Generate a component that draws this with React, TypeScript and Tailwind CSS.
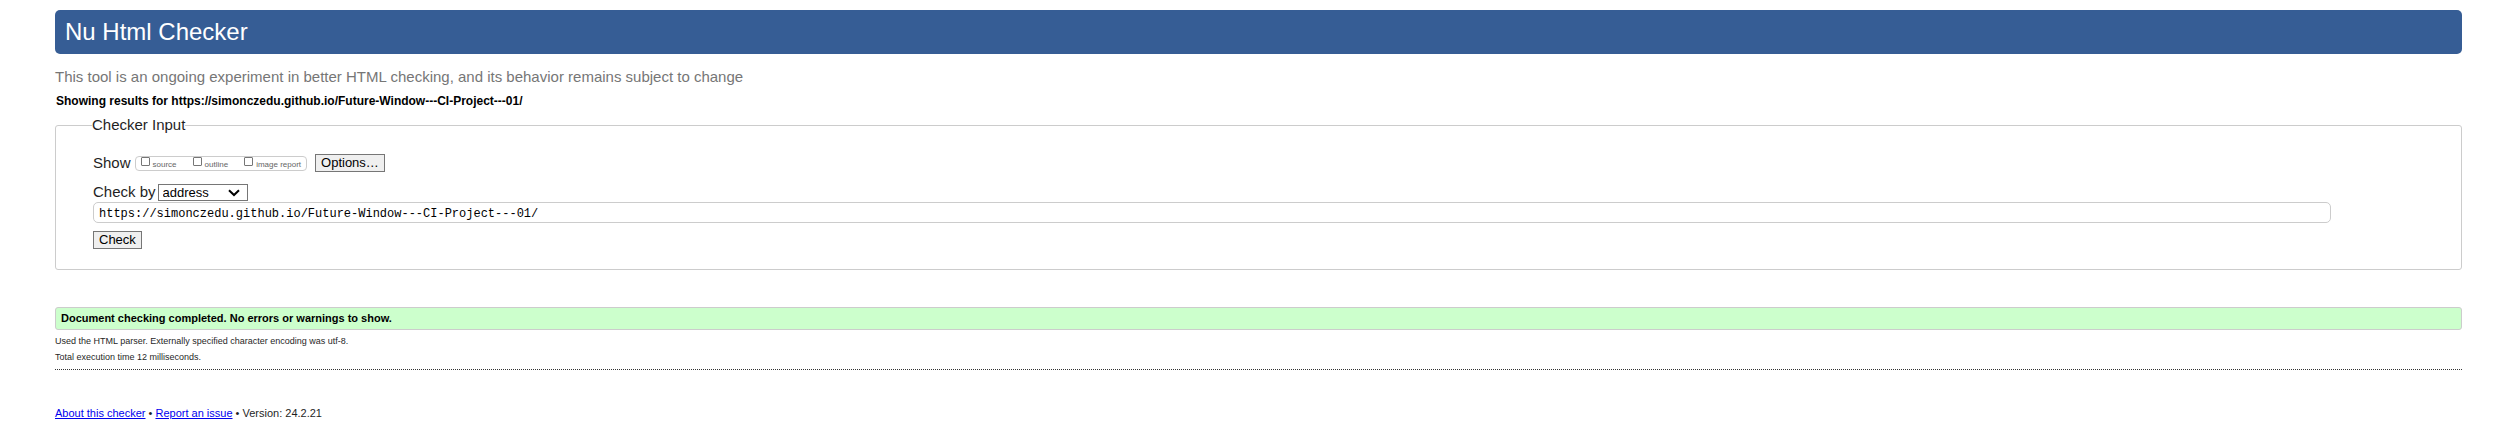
import { useState } from "react";

const SHOW_OPTIONS = ["source", "outline", "image report"];

export default function App() {
  const [address, setAddress] = useState(
    "https://simonczedu.github.io/Future-Window---CI-Project---01/",
  );

  return (
    <div className="bg-white pt-[10px] pr-[44px] pl-[55px] font-['Liberation_Sans',Arial,sans-serif] text-[#1f1f1f]">
      <header>
        <h1 className="rounded-[5px] bg-[#365d95] px-[10px] py-[8px] text-[24px] leading-[28px] text-white">
          Nu Html Checker
        </h1>
        <p className="mt-[14px] text-[15px] leading-[18px] text-[#767676]">
          This tool is an ongoing experiment in better HTML checking, and its behavior remains subject to change
        </p>
      </header>

      <main>
        <h2 className="mt-[7px] pl-px text-[12px] leading-[16px] font-bold text-black">
          Showing results for https://simonczedu.github.io/Future-Window---CI-Project---01/
        </h2>

        <form onSubmit={(e) => e.preventDefault()}>
          <fieldset className="mt-[7px] rounded-[3px] border border-[#ccc] pt-[20px] pr-[130px] pb-[20px] pl-[37px] text-[15px] leading-[18px]">
            <legend className="-ml-px">Checker Input</legend>
            <div className="flex items-center">
              <span>Show</span>
              <div className="ml-[4px] flex h-[15px] items-center gap-[16px] rounded-[4px] border border-[#ccc] px-[5px]">
                {SHOW_OPTIONS.map((name) => (
                  <label key={name} className="flex items-center gap-[3px] text-[8px] leading-[13px] text-[#666]">
                    <input
                      type="checkbox"
                      className="mb-[3px] size-[9px] appearance-none rounded-[1px] border border-[#767676] bg-white checked:bg-[#365d95]"
                    />
                    <span className="pt-[2px]">{name}</span>
                  </label>
                ))}
              </div>
              <button
                type="button"
                className="ml-[8px] h-[18px] border border-[#767676] bg-[#efefef] px-[5px] text-[13px] leading-[16px] text-black"
              >
                Options…
              </button>
            </div>

            <div className="mt-[11px] flex items-center">
              <label htmlFor="method">Check by</label>
              <div className="relative ml-[2px]">
                <select
                  id="method"
                  className="block h-[17px] w-[90px] appearance-none border border-[#767676] bg-white pl-[4px] text-[13px] leading-[15px] text-black"
                >
                  <option>address</option>
                  <option>file upload</option>
                  <option>text input</option>
                </select>
                <svg
                  viewBox="0 0 12 8"
                  className="pointer-events-none absolute top-[5px] right-[8px] h-[8px] w-[12px]"
                  fill="none"
                  stroke="black"
                  strokeWidth="2"
                >
                  <path d="M1 1.2 L6 6 L11 1.2" />
                </svg>
              </div>
            </div>

            <input
              type="url"
              aria-label="Address"
              value={address}
              onChange={(e) => setAddress(e.target.value)}
              className="mt-px block h-[21px] w-full rounded-[5px] border border-[#ccc] pt-[3px] pl-[5px] font-['Liberation_Mono','Courier_New',monospace] text-[12px] text-black"
            />
            <button
              type="submit"
              className="mt-[8px] block h-[18px] border border-[#767676] bg-[#efefef] px-[5px] text-[13px] leading-[16px] text-black"
            >
              Check
            </button>
          </fieldset>
        </form>

        <p className="mt-[37px] rounded-[3px] border border-[#ccc] bg-[#cfc] px-[5px] py-[4px] text-[11px] leading-[13px] font-bold text-black">
          Document checking completed. No errors or warnings to show.
        </p>
        <p className="mt-[3px] text-[9px] leading-[16px]">
          Used the HTML parser. Externally specified character encoding was utf-8.
        </p>
        <p className="text-[9px] leading-[16px]">Total execution time 12 milliseconds.</p>
      </main>

      <hr className="mt-[4px] border-t border-dotted border-[#333]" />

      <footer className="mt-[35px] pb-[10px] text-[11px] leading-[16px]">
        <a href="#about" className="text-[#0000ee] underline">About this checker</a>
        {" • "}
        <a href="#issues" className="text-[#0000ee] underline">Report an issue</a>
        {" • Version: 24.2.21"}
      </footer>
    </div>
  );
}
